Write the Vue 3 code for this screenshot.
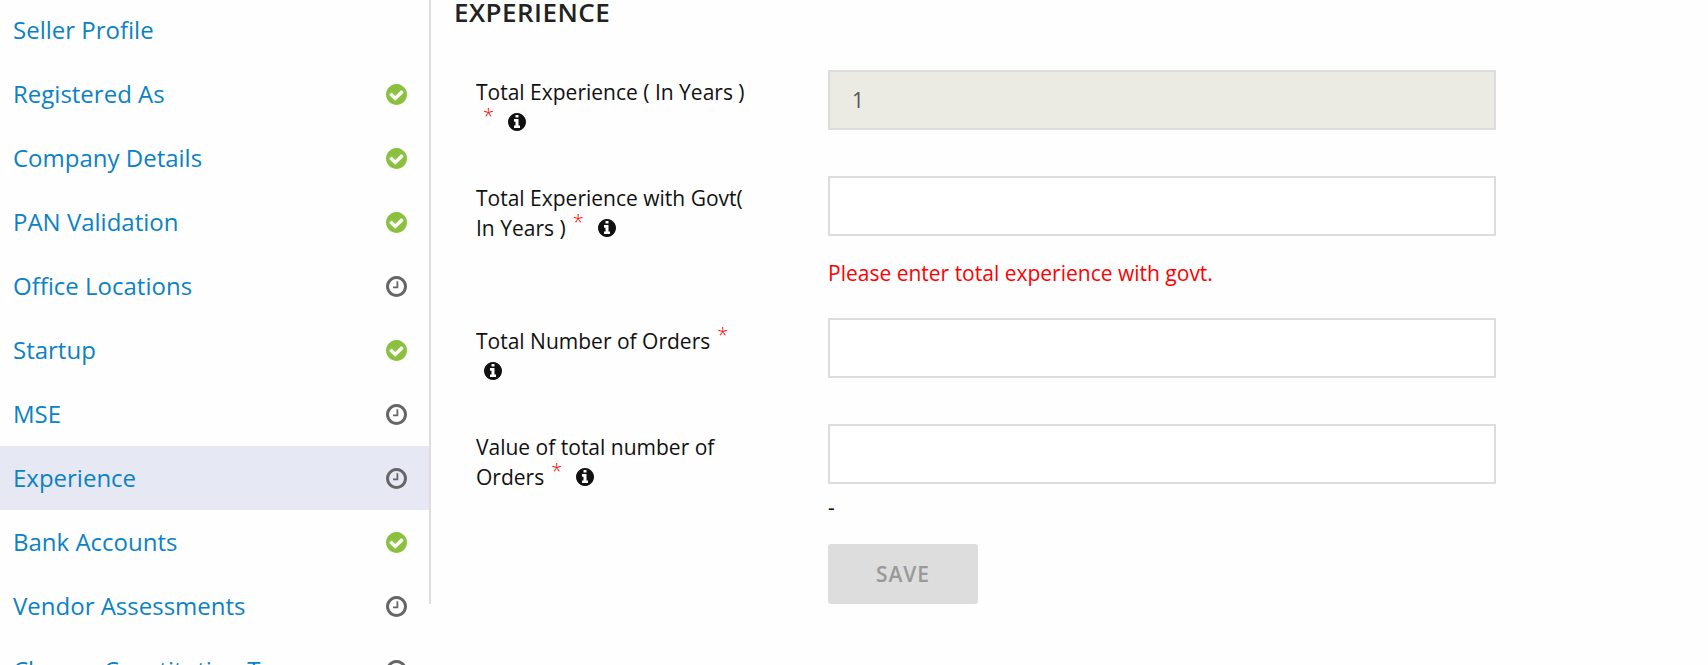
<script setup>
const items = [
  { name: 'Seller Profile', status: '' },
  { name: 'Registered As', status: 'done' },
  { name: 'Company Details', status: 'done' },
  { name: 'PAN Validation', status: 'done' },
  { name: 'Office Locations', status: 'pending' },
  { name: 'Startup', status: 'done' },
  { name: 'MSE', status: 'pending' },
  { name: 'Experience', status: 'pending', active: true },
  { name: 'Bank Accounts', status: 'done' },
  { name: 'Vendor Assessments', status: 'pending' },
  { name: 'Change Constitution Type', status: 'pending' }
]
// Each label is a list of lines; '*' and 'i' stand for the required mark and the info icon.
const fields = [
  { lines: [['Total Experience ( In Years )'], ['*', 'i']], value: '1', disabled: true },
  { lines: [['Total Experience with Govt('], ['In Years )', '*', 'i']], value: '', error: 'Please enter total experience with govt.' },
  { lines: [['Total Number of Orders', '*'], ['i']], value: '', low: true },
  { lines: [['Value of total number of'], ['Orders', '*', 'i']], value: '', note: '-', low: true }
]
</script>

<template>
  <div class="page">
    <aside class="side">
      <nav class="nav">
        <a v-for="it in items" :key="it.name" class="item" :class="{ active: it.active }">
          <span class="name">{{ it.name }}</span>
          <svg v-if="it.status === 'done'" class="status" viewBox="0 0 1536 1536">
            <path fill="#8cc03f" d="M1284 606q0-28-18-46l-91-90q-19-19-45-19t-45 19L677 877 451 651q-19-19-45-19t-45 19l-91 90q-18 18-18 46 0 27 18 45l362 362q19 19 45 19 27 0 46-19l543-543q18-18 18-45zm252 162q0 209-103 385.500T1153.500 1433 768 1536t-385.500-103T103 1153.500 0 768t103-385.500T382.500 103 768 0t385.500 103T1433 382.500 1536 768z" />
          </svg>
          <svg v-else-if="it.status === 'pending'" class="status" viewBox="0 0 1536 1536">
            <path fill="#666" d="M896 416v448q0 14-9 23t-23 9H544q-14 0-23-9t-9-23v-64q0-14 9-23t23-9h224V416q0-14 9-23t23-9h64q14 0 23 9t9 23zm416 352q0-148-73-273t-198-198-273-73-273 73-198 198-73 273 73 273 198 198 273 73 273-73 198-198 73-273zm224 0q0 209-103 385.500T1153.500 1433 768 1536t-385.500-103T103 1153.500 0 768t103-385.500T382.500 103 768 0t385.500 103T1433 382.500 1536 768z" />
          </svg>
        </a>
      </nav>
    </aside>
    <main class="main">
      <h2 class="title">EXPERIENCE</h2>
      <div v-for="(f, n) in fields" :key="n" class="row" :class="{ invalid: f.error, noted: f.note }">
        <label class="label" :class="{ low: f.low }">
          <span v-for="(line, l) in f.lines" :key="l" class="line">
            <template v-for="part in line" :key="part">
              <span v-if="part === '*'" class="req">*</span>
              <svg v-else-if="part === 'i'" class="info" viewBox="0 0 1536 1536">
                <path fill="#111" d="M1024 1248v-160q0-14-9-23t-23-9h-96V544q0-14-9-23t-23-9H544q-14 0-23 9t-9 23v160q0 14 9 23t23 9h96v320h-96q-14 0-23 9t-9 23v160q0 14 9 23t23 9h448q14 0 23-9t9-23zM896 352V192q0-14-9-23t-23-9H672q-14 0-23 9t-9 23v160q0 14 9 23t23 9h192q14 0 23-9t9-23zm640 416q0 209-103 385.500T1153.500 1433 768 1536t-385.500-103T103 1153.500 0 768t103-385.500T382.500 103 768 0t385.500 103T1433 382.500 1536 768z" />
              </svg>
              <span v-else class="text">{{ part }}</span>
            </template>
          </span>
        </label>
        <div class="control">
          <input class="input" type="text" :value="f.value" :disabled="f.disabled">
          <div v-if="f.error" class="error">{{ f.error }}</div>
          <div v-if="f.note" class="note">{{ f.note }}</div>
        </div>
      </div>
      <button class="save" disabled>SAVE</button>
    </main>
  </div>
</template>

<style>
body { margin: 0; background: #fefefe; overflow: hidden; }
</style>
<style scoped>
.page {
  display: flex;
  align-items: flex-start;
  height: 665px;
  overflow: hidden;
  background: #fefefe;
  color: #111;
  font-family: "Open Sans", "Noto Sans", sans-serif;
  font-size: 21px;
}
.side {
  box-sizing: border-box;
  width: 431px;
  height: 604px;
  border-right: 2px solid #ddd;
  flex: none;
}
.nav { margin-top: -2px; }
.item {
  display: flex;
  align-items: center;
  justify-content: space-between;
  height: 64px;
  padding: 0 22px 0 13px;
  color: #0c82c3;
  font-size: 24px;
}
.name { padding-bottom: 2px; }
.item.active { background: #e6e8f4; }
.status { width: 21px; height: 21px; }
.main { flex: 1; padding: 0 0 0 23px; }
.title {
  margin: 0;
  height: 70px;
  line-height: 24px;
  font-size: 26px;
  font-weight: 600;
  letter-spacing: 0.45px;
  color: #222;
}
.row { display: flex; height: 106px; padding-left: 22px; }
.row.invalid { height: 142px; }
.row.noted { height: 120px; }
.label { width: 352px; padding-top: 6px; }
.label.low { padding-top: 7px; }
.line { display: flex; height: 30px; line-height: 30px; white-space: pre; }
.text { padding-top: 1px; }
.req { color: #f00; font-size: 20px; font-weight: 300; margin: -5px 0 5px 7px; width: 17px; }
.info { width: 18px; height: 18px; margin: 7px 0 0 8px; }
.control { width: 668px; }
.input {
  display: block;
  box-sizing: border-box;
  width: 668px;
  height: 60px;
  margin: 0;
  padding: 0 22px;
  border: 2px solid #ddd;
  border-radius: 0;
  background: #fff;
  color: #555;
  font: inherit;
}
.input:disabled { background: #ebebe4; }
.error { margin-top: 22px; line-height: 30px; color: #f00; }
.note { margin-top: 8px; line-height: 30px; }
.save {
  display: block;
  width: 150px;
  height: 60px;
  margin-left: 374px;
  padding: 0;
  border: 0;
  border-radius: 3px;
  background: #ddd;
  color: #999;
  font: inherit;
  font-weight: 600;
  letter-spacing: 0.9px;
}
</style>
